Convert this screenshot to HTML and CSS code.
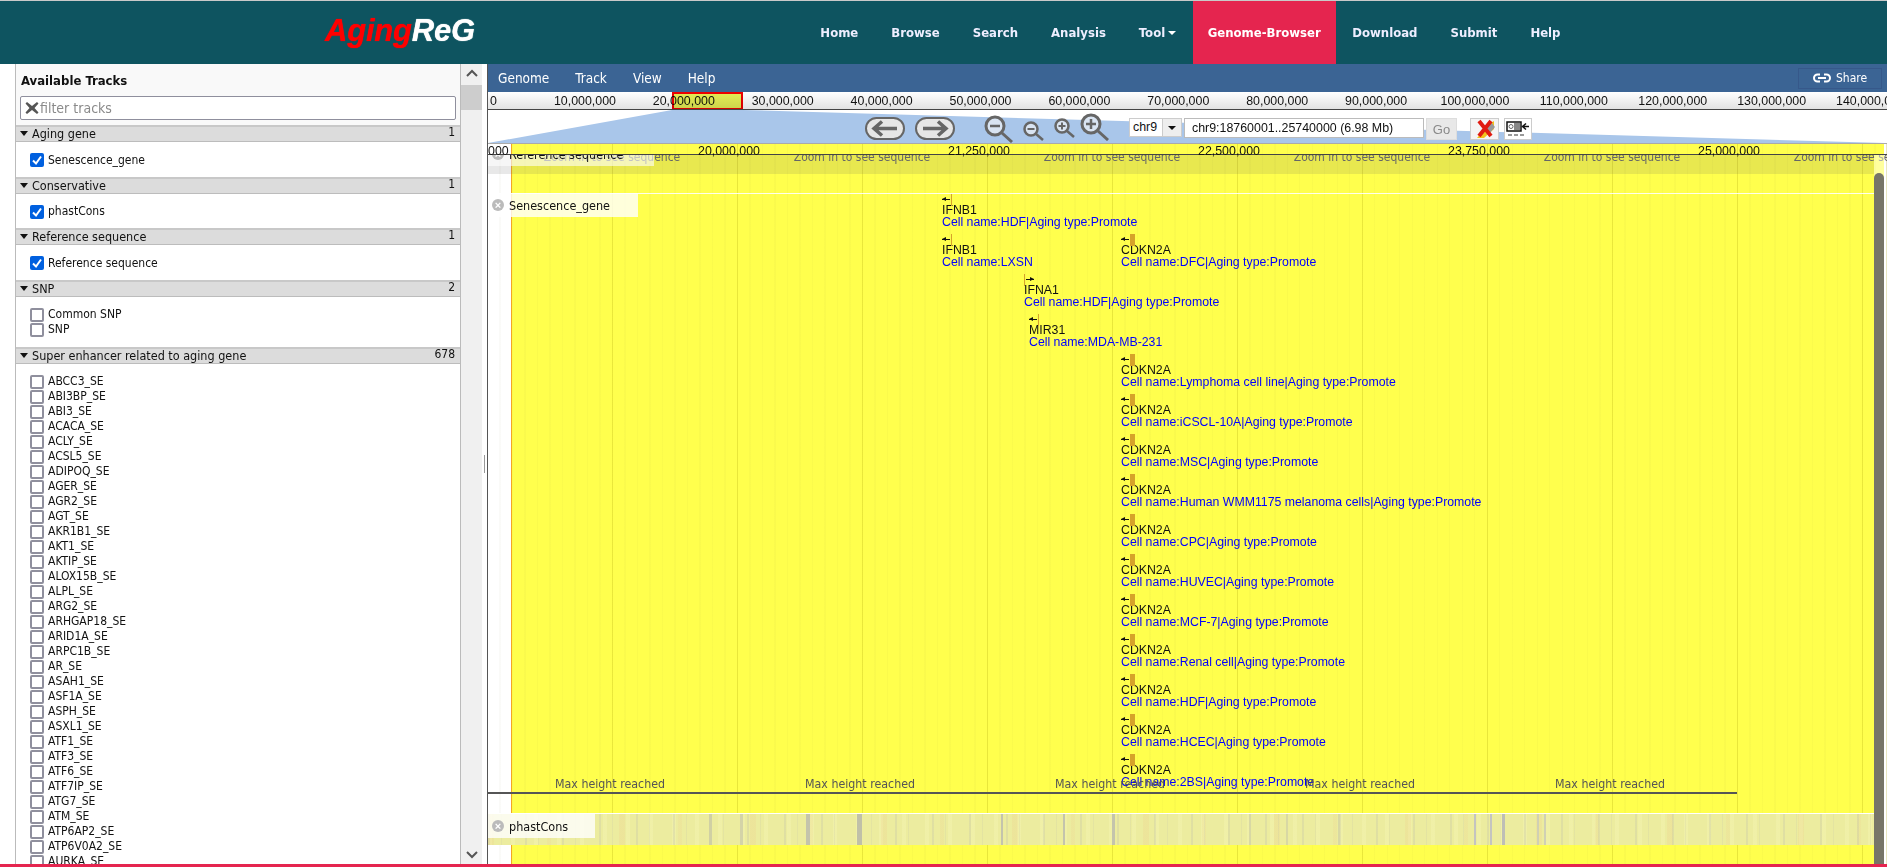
FILE: index.html
```html
<!DOCTYPE html>
<html lang="en">
    <head>
        <meta charset="UTF-8" />
        <title>AgingReG</title>
        <link rel="stylesheet" href="styles.css">
    </head>
    <body>
        <header class="topbar">
            <a class="logo"><span class="logo-red">Aging</span>ReG</a>
            <nav class="mainnav">
                <a>Home</a>
                <a>Browse</a>
                <a>Search</a>
                <a>Analysis</a>
                <a>Tool<i class="caret"></i></a>
                <a class="active">Genome-Browser</a>
                <a>Download</a>
                <a>Submit</a>
                <a>Help</a>
            </nav>
        </header>

        <main>
            <aside class="sidebar">
                <div class="tracklist">
                    <div class="tracklist-top">
                        <h2>Available Tracks</h2>
                        <div class="filter">
                            <svg width="14" height="14" viewBox="0 0 14 14"><path d="M2 1 L7 5 L12 1 L13.500 2.500 L9.500 7 L13.500 11.500 L12 13 L7 9 L2 13 L.5 11.500 L4.500 7 L.5 2.500 Z" fill="#555"/></svg>
                            <input type="text" placeholder="filter tracks" />
                        </div>
                    </div>

                    <div class="cat-head"><span><i class="tri"></i>Aging gene</span><b>1</b></div>
                    <div class="cat-body">
                        <label><input type="checkbox" checked />Senescence_gene</label>
                    </div>
                    <div class="cat-head"><span><i class="tri"></i>Conservative</span><b>1</b></div>
                    <div class="cat-body">
                        <label><input type="checkbox" checked />phastCons</label>
                    </div>
                    <div class="cat-head"><span><i class="tri"></i>Reference sequence</span><b>1</b></div>
                    <div class="cat-body">
                        <label><input type="checkbox" checked />Reference sequence</label>
                    </div>
                    <div class="cat-head"><span><i class="tri"></i>SNP</span><b>2</b></div>
                    <div class="cat-body">
                        <label><input type="checkbox" />Common SNP</label>
                        <label><input type="checkbox" />SNP</label>
                    </div>
                    <div class="cat-head"><span><i class="tri"></i>Super enhancer related to aging gene</span><b>678</b></div>
                    <div class="cat-body">
                        <label><input type="checkbox" />ABCC3_SE</label>
                        <label><input type="checkbox" />ABI3BP_SE</label>
                        <label><input type="checkbox" />ABI3_SE</label>
                        <label><input type="checkbox" />ACACA_SE</label>
                        <label><input type="checkbox" />ACLY_SE</label>
                        <label><input type="checkbox" />ACSL5_SE</label>
                        <label><input type="checkbox" />ADIPOQ_SE</label>
                        <label><input type="checkbox" />AGER_SE</label>
                        <label><input type="checkbox" />AGR2_SE</label>
                        <label><input type="checkbox" />AGT_SE</label>
                        <label><input type="checkbox" />AKR1B1_SE</label>
                        <label><input type="checkbox" />AKT1_SE</label>
                        <label><input type="checkbox" />AKTIP_SE</label>
                        <label><input type="checkbox" />ALOX15B_SE</label>
                        <label><input type="checkbox" />ALPL_SE</label>
                        <label><input type="checkbox" />ARG2_SE</label>
                        <label><input type="checkbox" />ARHGAP18_SE</label>
                        <label><input type="checkbox" />ARID1A_SE</label>
                        <label><input type="checkbox" />ARPC1B_SE</label>
                        <label><input type="checkbox" />AR_SE</label>
                        <label><input type="checkbox" />ASAH1_SE</label>
                        <label><input type="checkbox" />ASF1A_SE</label>
                        <label><input type="checkbox" />ASPH_SE</label>
                        <label><input type="checkbox" />ASXL1_SE</label>
                        <label><input type="checkbox" />ATF1_SE</label>
                        <label><input type="checkbox" />ATF3_SE</label>
                        <label><input type="checkbox" />ATF6_SE</label>
                        <label><input type="checkbox" />ATF7IP_SE</label>
                        <label><input type="checkbox" />ATG7_SE</label>
                        <label><input type="checkbox" />ATM_SE</label>
                        <label><input type="checkbox" />ATP6AP2_SE</label>
                        <label><input type="checkbox" />ATP6V0A2_SE</label>
                        <label><input type="checkbox" />AURKA_SE</label>
                    </div>
                </div>
                <div class="side-scroll">
                    <svg width="12" height="8" viewBox="0 0 12 8"><path d="M1 7 L6 2 L11 7" fill="none" stroke="#555" stroke-width="2"/></svg>
                    <div class="side-thumb"></div>
                    <svg class="side-down" width="12" height="8" viewBox="0 0 12 8"><path d="M1 1 L6 6 L11 1" fill="none" stroke="#555" stroke-width="2"/></svg>
                </div>
                <div class="splitter"><i></i></div>
            </aside>

            <section class="browser">
                <div class="menubar">
                    <div class="menu-items">
                        <a>Genome</a>
                        <a>Track</a>
                        <a>View</a>
                        <a>Help</a>
                    </div>
                    <a class="share">
                        <svg width="18" height="10" viewBox="0 0 18 10"><path d="M7 1.500 H4.500 a3.500 3.500 0 0 0 0 7 H7 M11 1.500 H13.500 a3.500 3.500 0 0 1 0 7 H11 M5 5 H13" fill="none" stroke="#fff" stroke-width="2"/></svg>
                        Share
                    </a>
                </div>

                <div class="overview">
                    <span class="ov-zero">0</span>
                    <span>10,000,000</span>
                    <span>20,000,000</span>
                    <span>30,000,000</span>
                    <span>40,000,000</span>
                    <span>50,000,000</span>
                    <span>60,000,000</span>
                    <span>70,000,000</span>
                    <span>80,000,000</span>
                    <span>90,000,000</span>
                    <span>100,000,000</span>
                    <span>110,000,000</span>
                    <span>120,000,000</span>
                    <span>130,000,000</span>
                    <span>140,000,000</span>
                    <div class="ov-highlight"></div>
                </div>

                <div class="toolbar">
                    <svg class="trapezoid" viewBox="0 0 1399 33" preserveAspectRatio="none"><polygon points="184,0 255,0 1397,33 0,33" fill="#a9c6ea"/></svg>
                    <div class="tool-group pan">
                        <svg width="40" height="23" viewBox="0 0 40 23"><rect x="1" y="1" width="38" height="21" rx="10.500" fill="#e6e6e6" stroke="#666" stroke-width="2"/><path d="M32 11.500 H9 M17 4.500 L9 11.500 L17 18.500" fill="none" stroke="#666" stroke-width="3.500"/></svg>
                        <svg width="40" height="23" viewBox="0 0 40 23"><rect x="1" y="1" width="38" height="21" rx="10.500" fill="#e6e6e6" stroke="#666" stroke-width="2"/><path d="M8 11.500 H31 M23 4.500 L31 11.500 L23 18.500" fill="none" stroke="#666" stroke-width="3.500"/></svg>
                    </div>
                    <div class="tool-group zoom">
                        <svg class="zoom-out-big" width="29" height="28" viewBox="0 0 29 28"><circle cx="11" cy="11" r="9" fill="#d9e4f2" stroke="#666" stroke-width="3"/><path d="M6 11 H16" stroke="#666" stroke-width="2.500"/><path d="M18 18 L28 27" stroke="#666" stroke-width="3"/></svg>
                        <svg class="zoom-out-small" width="21" height="20" viewBox="0 0 21 20"><circle cx="8" cy="8" r="6.500" fill="#d9e4f2" stroke="#666" stroke-width="2.500"/><path d="M4.500 8 H11.500" stroke="#666" stroke-width="2"/><path d="M13 13 L20 19" stroke="#666" stroke-width="2.500"/></svg>
                        <svg class="zoom-in-small" width="21" height="20" viewBox="0 0 21 20"><circle cx="8" cy="8" r="6.500" fill="#d9e4f2" stroke="#666" stroke-width="2.500"/><path d="M4.500 8 H11.500 M8 4.500 V11.500" stroke="#666" stroke-width="2"/><path d="M13 13 L20 19" stroke="#666" stroke-width="2.500"/></svg>
                        <svg class="zoom-in-big" width="29" height="28" viewBox="0 0 29 28"><circle cx="11" cy="11" r="9" fill="#d9e4f2" stroke="#666" stroke-width="3"/><path d="M6 11 H16 M11 6 V16" stroke="#666" stroke-width="2.500"/><path d="M18 18 L28 27" stroke="#666" stroke-width="3"/></svg>
                    </div>
                    <div class="ref-select"><span>chr9</span><i><b></b></i></div>
                    <div class="location">chr9:18760001..25740000 (6.98 Mb)</div>
                    <button class="go">Go</button>
                    <button class="icon-btn clear-btn">
                        <svg width="22" height="20" viewBox="0 0 22 20"><path d="M3 19 L15 5 L20 2 L20 10 L10 19 Z" fill="#f2c21b"/><path d="M11 9 L17 3 L21 8 L15 15 Z" fill="#999"/><path d="M5 2 L17 17 M17 2 L5 17" stroke="#e01b10" stroke-width="4"/></svg>
                    </button>
                    <button class="icon-btn resize-btn">
                        <svg width="24" height="18" viewBox="0 0 24 18"><rect x="1" y="2" width="14" height="9" fill="#fff" stroke="#111" stroke-width="1.500"/><rect x="8" y="3" width="6" height="7" fill="#888"/><circle cx="5" cy="6.500" r="2" fill="none" stroke="#666"/><path d="M23 6.500 H17 M20 3.500 L16.500 6.500 L20 9.500" fill="none" stroke="#111" stroke-width="1.500"/><path d="M2 15 H6 M8 15 H12 M14 15 H18" stroke="#999" stroke-width="2"/></svg>
                    </button>
                </div>

                <div class="detail">
                    <div class="highlight"></div>
                    <div class="gridlines"></div>

                    <div class="scalebar">
                        <span class="scale-first">000</span>
                        <span>20,000,000</span>
                        <span>21,250,000</span>
                        <span>22,500,000</span>
                        <span>23,750,000</span>
                        <span>25,000,000</span>
                    </div>

                    <div class="trackview">
                        <div class="seq-band">
                            <span>Zoom in to see sequence</span>
                            <span>Zoom in to see sequence</span>
                            <span>Zoom in to see sequence</span>
                            <span>Zoom in to see sequence</span>
                            <span>Zoom in to see sequence</span>
                            <span>Zoom in to see sequence</span>
                        </div>
                        <div class="track-label label-seq"><i class="close">×</i>Reference sequence</div>

                        <div class="track-line line-genes"></div>
                        <div class="track-label label-genes"><i class="close">×</i>Senescence_gene</div>

                        <div class="feature ifnb" style="top: 39px">
                            <div class="glyph"><i class="arrow-l"></i><i class="bar bar-thin"></i></div>
                            <div class="gene">IFNB1</div>
                            <div class="desc">Cell name:HDF|Aging type:Promote</div>
                        </div>
                        <div class="feature ifnb" style="top: 79px">
                            <div class="glyph"><i class="arrow-l"></i><i class="bar bar-thin"></i></div>
                            <div class="gene">IFNB1</div>
                            <div class="desc">Cell name:LXSN</div>
                        </div>
                        <div class="feature cdkn" style="top: 79px">
                            <div class="glyph"><i class="arrow-l"></i><i class="bar"></i></div>
                            <div class="gene">CDKN2A</div>
                            <div class="desc">Cell name:DFC|Aging type:Promote</div>
                        </div>
                        <div class="feature ifna" style="top: 119px">
                            <div class="glyph"><i class="bar bar-thin bar-start"></i><i class="arrow-r"></i></div>
                            <div class="gene">IFNA1</div>
                            <div class="desc">Cell name:HDF|Aging type:Promote</div>
                        </div>
                        <div class="feature mir" style="top: 159px">
                            <div class="glyph"><i class="arrow-l"></i><i class="bar bar-thin"></i></div>
                            <div class="gene">MIR31</div>
                            <div class="desc">Cell name:MDA-MB-231</div>
                        </div>
                        <div class="feature cdkn" style="top: 199px">
                            <div class="glyph"><i class="arrow-l"></i><i class="bar"></i></div>
                            <div class="gene">CDKN2A</div>
                            <div class="desc">Cell name:Lymphoma cell line|Aging type:Promote</div>
                        </div>
                        <div class="feature cdkn" style="top: 239px">
                            <div class="glyph"><i class="arrow-l"></i><i class="bar"></i></div>
                            <div class="gene">CDKN2A</div>
                            <div class="desc">Cell name:iCSCL-10A|Aging type:Promote</div>
                        </div>
                        <div class="feature cdkn" style="top: 279px">
                            <div class="glyph"><i class="arrow-l"></i><i class="bar"></i></div>
                            <div class="gene">CDKN2A</div>
                            <div class="desc">Cell name:MSC|Aging type:Promote</div>
                        </div>
                        <div class="feature cdkn" style="top: 319px">
                            <div class="glyph"><i class="arrow-l"></i><i class="bar"></i></div>
                            <div class="gene">CDKN2A</div>
                            <div class="desc">Cell name:Human WMM1175 melanoma cells|Aging type:Promote</div>
                        </div>
                        <div class="feature cdkn" style="top: 359px">
                            <div class="glyph"><i class="arrow-l"></i><i class="bar"></i></div>
                            <div class="gene">CDKN2A</div>
                            <div class="desc">Cell name:CPC|Aging type:Promote</div>
                        </div>
                        <div class="feature cdkn" style="top: 399px">
                            <div class="glyph"><i class="arrow-l"></i><i class="bar"></i></div>
                            <div class="gene">CDKN2A</div>
                            <div class="desc">Cell name:HUVEC|Aging type:Promote</div>
                        </div>
                        <div class="feature cdkn" style="top: 439px">
                            <div class="glyph"><i class="arrow-l"></i><i class="bar"></i></div>
                            <div class="gene">CDKN2A</div>
                            <div class="desc">Cell name:MCF-7|Aging type:Promote</div>
                        </div>
                        <div class="feature cdkn" style="top: 479px">
                            <div class="glyph"><i class="arrow-l"></i><i class="bar"></i></div>
                            <div class="gene">CDKN2A</div>
                            <div class="desc">Cell name:Renal cell|Aging type:Promote</div>
                        </div>
                        <div class="feature cdkn" style="top: 519px">
                            <div class="glyph"><i class="arrow-l"></i><i class="bar"></i></div>
                            <div class="gene">CDKN2A</div>
                            <div class="desc">Cell name:HDF|Aging type:Promote</div>
                        </div>
                        <div class="feature cdkn" style="top: 559px">
                            <div class="glyph"><i class="arrow-l"></i><i class="bar"></i></div>
                            <div class="gene">CDKN2A</div>
                            <div class="desc">Cell name:HCEC|Aging type:Promote</div>
                        </div>
                        <div class="feature cdkn" style="top: 599px">
                            <div class="glyph"><i class="arrow-l"></i><i class="bar"></i></div>
                            <div class="gene">CDKN2A</div>
                            <div class="desc">Cell name:2BS|Aging type:Promote</div>
                        </div>

                        <div class="max-height">
                            <span>Max height reached</span>
                            <span>Max height reached</span>
                            <span>Max height reached</span>
                            <span>Max height reached</span>
                            <span>Max height reached</span>
                        </div>

                        <div class="phast-band"></div>
                        <div class="track-label label-phast"><i class="close">×</i>phastCons</div>

                        <div class="view-scroll"><div class="view-thumb"></div></div>
                    </div>
                </div>
            </section>
        </main>
    </body>
</html>
```

FILE: styles.css
```css
*,
*::before,
*::after {
    box-sizing: border-box;
}

body {
    margin: 0;
    height: 100vh;
    overflow: hidden;
    display: flex;
    flex-direction: column;
    border-top: 1px solid #c9c9c9;
    border-bottom: 3px solid #e5254f;
    background: #fff;
    font-family: "Liberation Sans", Arial, sans-serif;
    color: #111;
}

/* top bar */
.topbar {
    flex: none;
    height: 63px;
    display: flex;
    align-items: stretch;
    background: #0e5460;
}

.logo {
    margin-left: 325px;
    align-self: center;
    margin-top: -4px;
    font-size: 31px;
    font-weight: bold;
    font-style: italic;
    letter-spacing: -0.2px;
    color: #fff;
    text-shadow: 0 0 1px currentColor;
}

.logo-red {
    color: #f00;
}

.mainnav {
    display: flex;
    margin-left: auto;
    margin-right: 310px;

    & > a {
        display: flex;
        align-items: center;
        padding: 0 16.500px;
        color: #eef;
        font-family: "DejaVu Sans", sans-serif;
        font-stretch: condensed;
        font-size: 13px;
        font-weight: bold;

        &.active {
            background: #e5254f;
            color: #fff;
            padding: 0 15px;
        }
    }
}

.caret {
    display: inline-block;
    margin-left: 3px;
    border-top: 4px solid #fff;
    border-left: 4px solid transparent;
    border-right: 4px solid transparent;
}

main {
    flex: 1;
    min-height: 0;
    display: flex;
}

/* left track selector */
.sidebar {
    flex: none;
    width: 488px;
    display: flex;
    padding-left: 15px;
    border-right: 1px solid #555;
    font-family: "DejaVu Sans", sans-serif;
    font-stretch: condensed;
    font-size: 12px;
}

.tracklist {
    width: 446px;
    overflow: hidden;
    border-left: 1px solid #bbb;
    border-right: 1px solid #bbb;
}

.tracklist-top {
    height: 61px;
    padding: 9px 4px 0 4px;
    background: #f9f9f9;

    & h2 {
        margin: 0 0 8px 1px;
        height: 15px;
        line-height: 15px;
        font-size: 13px;
        font-weight: bold;
    }
}

.filter {
    height: 24px;
    display: flex;
    align-items: center;
    gap: 1px;
    padding-left: 4px;
    background: #fff;
    border: 1px solid #8f8f9d;
    border-radius: 2px;

    & input {
        flex: 1;
        border: none;
        outline: none;
        padding: 0;
        font: inherit;
        font-size: 14px;

        &::placeholder {
            color: #8a8a8a;
            opacity: 1;
        }
    }
}

.cat-head {
    height: 17px;
    display: flex;
    justify-content: space-between;
    padding: 0 5px 0 4px;
    background: #dcdcdc;
    border-top: 2px solid #c8c8c8;
    border-bottom: 1px solid #bcbcbc;
    line-height: 14px;
    font-size: 12.500px;

    & b {
        font-weight: normal;
        font-size: 12px;
        line-height: 11px;
    }
}

.tri {
    display: inline-block;
    margin-right: 4px;
    vertical-align: 2px;
    border-top: 5px solid #111;
    border-left: 4px solid transparent;
    border-right: 4px solid transparent;
}

.cat-body {
    padding: 10px 0 9.670px 14px;

    & label {
        display: flex;
        align-items: center;
        height: 15px;
    }

    & input {
        appearance: none;
        flex: none;
        width: 14px;
        height: 14px;
        margin: 1px 4px 0 0;
        background: #fff;
        border: 2px solid #8f8f9d;
        border-radius: 2px;

        &:checked {
            border: none;
            background: #0060df url("data:image/svg+xml,%3Csvg xmlns='http://www.w3.org/2000/svg' viewBox='0 0 14 14'%3E%3Cpath d='M3 7.500 L6 10.500 L11 3.500' fill='none' stroke='white' stroke-width='2'/%3E%3C/svg%3E") center no-repeat;
        }
    }
}

.side-scroll {
    position: relative;
    flex: none;
    width: 21px;
    background: #f0f0f0;
    display: flex;
    flex-direction: column;
    align-items: center;
    padding-top: 5px;

    & .side-down {
        margin-top: auto;
        margin-bottom: 5px;
    }
}

.side-thumb {
    align-self: stretch;
    height: 25px;
    margin-top: 8px;
    background: #cdcdcd;
}

.splitter {
    flex: 1;
    display: flex;
    align-items: center;
    margin-top: -1px;

    & i {
        width: 1px;
        height: 18px;
        margin-left: 2px;
        background: #999;
    }
}

/* genome browser */
.browser {
    flex: 1;
    min-width: 0;
    display: flex;
    flex-direction: column;
}

.menubar {
    flex: none;
    height: 28px;
    display: flex;
    justify-content: space-between;
    align-items: center;
    padding: 0 5px 0 10px;
    background: #3b6494;
    color: #fff;
    font-family: "DejaVu Sans", sans-serif;
    font-stretch: condensed;
    font-size: 13.500px;
}

.menu-items {
    display: flex;
    gap: 26px;
}

.share {
    display: flex;
    align-items: center;
    gap: 5px;
    width: 84px;
    height: 21px;
    padding-left: 14px;
    border: 1px solid #36588a;
    font-size: 12px;
}

.overview {
    position: relative;
    flex: none;
    height: 18px;
    display: flex;
    overflow: hidden;
    padding-left: 2px;
    background: linear-gradient(#fff, #e2e2e2);
    border-bottom: 1px solid #444;
    font-size: 12.400px;
    line-height: 18px;

    & > span {
        flex: none;
        width: 98.900px;
        text-align: center;
    }

    & > .ov-zero {
        width: 45.500px;
        text-align: left;
    }
}

.ov-highlight {
    position: absolute;
    left: 184px;
    top: 0;
    width: 71px;
    height: 18px;
    background: #e6ee55;
    border: 2px solid #e00;
    mix-blend-mode: multiply;
}

.toolbar {
    position: relative;
    flex: none;
    height: 33px;
    display: flex;
    align-items: flex-start;
    padding: 7px 0 0 377px;
}

.trapezoid {
    position: absolute;
    left: 0;
    top: 0;
    width: 100%;
    height: 100%;
}

.tool-group {
    position: relative;
    display: flex;
}

.pan {
    gap: 10px;
}

.zoom {
    margin: -2px 0 0 29px;
    gap: 10px;

    & .zoom-out-small {
        margin-top: 6px;
    }

    & .zoom-in-small {
        margin-top: 3px;
    }

    & .zoom-in-big {
        margin: -2px 0 0 -5px;
    }
}

.ref-select {
    position: relative;
    display: flex;
    width: 53px;
    height: 19px;
    margin: 1px 0 0 20px;
    background: #fff;
    border: 1px solid #ccc;
    font-size: 12.400px;
    line-height: 17px;

    & span {
        flex: 1;
        padding-left: 3px;
    }

    & i {
        width: 19px;
        display: flex;
        justify-content: center;
        align-items: center;
        background: #eee;
        border-left: 1px solid #ccc;
    }

    & b {
        border-top: 4px solid #111;
        border-left: 4px solid transparent;
        border-right: 4px solid transparent;
    }
}

.location {
    position: relative;
    width: 240px;
    height: 20px;
    margin: 1px 0 0 2px;
    padding-left: 7px;
    background: #fff;
    border: 1px solid #bbb;
    font-size: 12.400px;
    line-height: 18px;
}

.go {
    position: relative;
    width: 31px;
    height: 22px;
    margin: 1px 0 0 2px;
    padding: 0;
    background: #e8e8e8;
    border: 1px solid #ddd;
    color: #888;
    font: inherit;
    font-size: 13px;
}

.icon-btn {
    position: relative;
    display: flex;
    align-items: center;
    justify-content: center;
    height: 22px;
    padding: 0;
    background: #f4f4f4;
    border: 1px solid #ccc;
}

.clear-btn {
    width: 29px;
    margin: 1px 0 0 13px;
}

.resize-btn {
    width: 28px;
    margin: 1px 0 0 5px;
    background: #fff;
}

.detail {
    position: relative;
    flex: 1;
    min-height: 0;
    display: flex;
    flex-direction: column;
    overflow: hidden;
    background: #fff;
}

.highlight {
    position: absolute;
    left: 23px;
    right: 3px;
    top: 0;
    bottom: 0;
    background: #ffff4d;
    border-left: 1px solid #f4a623;
}

.gridlines {
    position: absolute;
    inset: 0;
    background-image:
        repeating-linear-gradient(90deg, rgba(170, 160, 0, 0.22) 0 1px, transparent 1px 125px),
        repeating-linear-gradient(90deg, rgba(120, 120, 60, 0.035) 0 1px, transparent 1px 12.500px);
    background-position: -1px 0;
}

.scalebar {
    position: relative;
    z-index: 2;
    flex: none;
    height: 12px;
    display: flex;
    border-top: 1px solid #aaa;
    border-bottom: 1px solid #444;
    font-size: 12.400px;
    line-height: 14px;
    white-space: nowrap;

    & > span {
        flex: none;
        width: 250px;
        height: 10px;
    }

    & > .scale-first {
        width: 210px;
    }
}

.trackview {
    position: relative;
    flex: 1;
    overflow: hidden;
}

.seq-band {
    position: absolute;
    left: 0;
    right: 13px;
    top: 0;
    height: 19px;
    display: flex;
    margin-left: -1px;
    background: rgba(90, 90, 90, 0.14);
    color: #666;
    font-family: "DejaVu Sans", sans-serif;
    font-stretch: condensed;
    font-size: 12px;
    line-height: 5px;

    & span {
        flex: none;
        width: 250px;
        text-align: center;
    }
}

.track-label {
    position: absolute;
    left: 0;
    display: flex;
    align-items: center;
    height: 24px;
    padding-left: 4px;
    background: rgba(255, 255, 255, 0.8);
    font-family: "DejaVu Sans", sans-serif;
    font-stretch: condensed;
    font-size: 12.500px;
}

.label-seq {
    top: -13px;
    width: 166px;
    background: rgba(255, 255, 255, 0.6);
}

.label-genes {
    top: 38px;
    width: 150px;
}

.label-phast {
    top: 659px;
    width: 107px;
}

.close {
    flex: none;
    width: 12px;
    height: 12px;
    margin-right: 5px;
    border-radius: 50%;
    background: #bbb;
    color: #fff;
    font: normal bold 11px/12px "Liberation Sans", sans-serif;
    text-align: center;
}

.track-line {
    position: absolute;
    left: 0;
    right: 13px;
    height: 1px;
    background: rgba(255, 255, 255, 0.9);
}

.line-genes {
    top: 38px;
}

.feature {
    position: absolute;
    white-space: nowrap;
    font-size: 12.300px;
    line-height: 12px;

    &.ifnb {
        left: 454px;
    }

    &.ifna {
        left: 536px;
    }

    &.mir {
        left: 541px;
    }

    &.cdkn {
        left: 633px;
    }
}

.glyph {
    position: relative;
    height: 10px;
}

.bar {
    position: absolute;
    left: 9px;
    top: 0;
    width: 5px;
    height: 12px;
    background: #d6a32a;

    &.bar-thin {
        width: 1px;
    }

    &.bar-start {
        left: 0;
    }
}

.arrow-l,
.arrow-r {
    position: absolute;
    top: 5px;
    width: 8px;
    height: 1px;
    background: #111;

    &::before {
        content: "";
        position: absolute;
        top: -2px;
        border-top: 2.500px solid transparent;
        border-bottom: 2.500px solid transparent;
    }
}

.arrow-l {
    left: 0;

    &::before {
        left: 0;
        border-right: 4px solid #111;
    }
}

.arrow-r {
    left: 2px;

    &::before {
        right: 0;
        border-left: 4px solid #111;
    }
}

.desc {
    color: #00f;
}

.max-height {
    position: absolute;
    left: -3px;
    top: 621px;
    width: 1252px;
    height: 18px;
    display: flex;
    border-bottom: 2px solid #555;
    color: #555;
    font-family: "DejaVu Sans", sans-serif;
    font-stretch: condensed;
    font-size: 12.300px;
    line-height: 16px;

    & span {
        flex: none;
        width: 250px;
        text-align: center;
    }
}

/* phastCons density, dark bars read off the reference */
.phast-band {
    position: absolute;
    left: 0;
    right: 13px;
    top: 658px;
    height: 32px;
    border-top: 1px solid #fff;
    background-color: #ecec9f;
    background-image:
        linear-gradient(90deg,
            transparent 221px, #d0d0a4 221px 224px, transparent 224px 252px,
            #d4d4a8 252px 255px, transparent 255px 318px,
            #c4c4ac 318px 322px, transparent 322px 369px,
            #c0c0a8 369px 374px, transparent 374px 513px,
            #c4c4ac 513px 515px, transparent 515px 575px,
            #c4c4ac 575px 577px, transparent 577px 624px,
            #c4c4ac 624px 627px, transparent 627px 761px,
            #d8d8a4 761px 763px, transparent 763px 798px,
            #d8d8a4 798px 800px, transparent 800px 850px,
            #d8d8a4 850px 852px, transparent 852px 986px,
            #c4c4c0 986px 988px, transparent 988px 1002px,
            #c4c4c0 1002px 1004px, transparent 1004px 1014px,
            #bebeb6 1014px 1017px, transparent 1017px 1049px,
            #d0d0b4 1049px 1051px, transparent 1051px 1056px,
            #d0d0b4 1056px 1058px, transparent 1058px),
        repeating-linear-gradient(90deg, rgba(190, 190, 170, 0.28) 0 2px, transparent 2px 13px, rgba(190, 190, 170, 0.18) 13px 14px, transparent 14px 37px),
        repeating-linear-gradient(90deg, rgba(240, 190, 130, 0.16) 0 6px, transparent 6px 59px, rgba(240, 190, 130, 0.12) 59px 63px, transparent 63px 131px),
        repeating-linear-gradient(90deg, rgba(255, 255, 200, 0.2) 0 4px, transparent 4px 23px);
}

.view-scroll {
    position: absolute;
    right: 3px;
    top: 0;
    bottom: 0;
    width: 10px;
    background: rgba(255, 255, 255, 0.45);
}

.view-thumb {
    height: 100%;
    margin-top: 18px;
    background: #777568;
    border-radius: 5px 5px 0 0;
}
```
